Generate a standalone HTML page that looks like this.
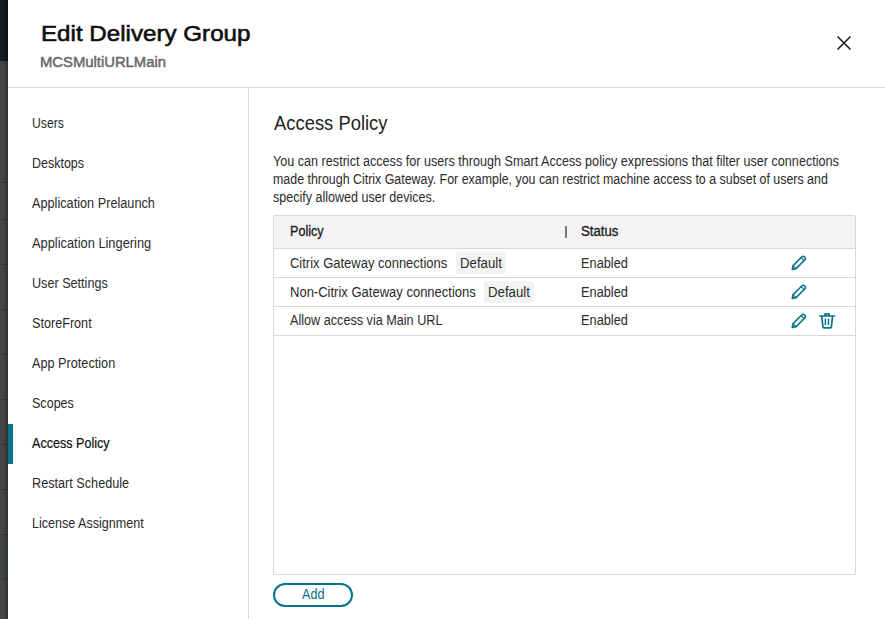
<!DOCTYPE html>
<html>
<head>
<meta charset="utf-8">
<title>Edit Delivery Group</title>
<style>
html,body{margin:0;padding:0;}
body{width:885px;height:619px;overflow:hidden;background:#fff;position:relative;font-family:"Liberation Sans",sans-serif;color:#1b1b1b;font-size:14px;}
.abs{position:absolute;}
.t{position:absolute;white-space:nowrap;line-height:20px;transform-origin:0 50%;}
#strip{left:0;top:0;width:8px;height:619px;background:linear-gradient(to right,#464646 0,#444 3px,#3f3f3f 5px,#393939 6.5px,#2d2d2d 8px);}
#striptop{left:0;top:0;width:8px;height:61px;background:linear-gradient(to right,#141f21 0,#121c1e 5px,#0a1618 6.5px,#020f10 8px);}
.sl{left:0;width:8px;height:1px;background:rgba(0,0,0,0.18);}
#hline{left:8px;top:87px;width:877px;height:1px;background:#d8d8d8;}
#vline{left:248px;top:88px;width:1px;height:531px;background:#d8d8d8;}
#bar{left:8px;top:424px;width:5px;height:40px;background:#07758a;}
#table{left:273px;top:215px;width:581px;height:358px;border:1px solid #d8d8d8;border-radius:2px;background:#fff;}
#thead{left:274px;top:216px;width:581px;height:32px;background:#f3f3f3;}
.rl{left:274px;width:581px;height:1px;background:#d8d8d8;}
.tag{height:22px;background:#f3f3f3;border-radius:3px;}
#sep{left:565px;top:226px;width:2px;height:12px;background:#777;}
#add{left:273px;top:583px;width:76px;height:20px;border:2px solid #08728a;border-radius:12px;}
svg{position:absolute;overflow:visible;}
</style>
</head>
<body>
<div class="abs" id="strip"></div>
<div class="abs" id="striptop"></div>
<div class="abs sl" style="top:182px"></div>
<div class="abs sl" style="top:219px"></div>
<div class="abs sl" style="top:264px"></div>
<div class="abs sl" style="top:309px"></div>
<div class="abs sl" style="top:354px"></div>
<div class="abs sl" style="top:399px"></div>
<div class="abs sl" style="top:444px"></div>
<div class="abs sl" style="top:489px"></div>
<div class="abs sl" style="top:534px"></div>
<div class="abs sl" style="top:579px"></div>
<div class="abs" style="left:0;top:535px;width:8px;height:44px;background:rgba(20,55,60,0.13)"></div>
<div class="abs" id="hline"></div>
<div class="abs" id="vline"></div>
<svg id="close" style="left:837px;top:36px" width="14" height="14" viewBox="0 0 14 14"><path d="M0.5 0.5 L13.5 13.5 M13.5 0.5 L0.5 13.5" stroke="#1b1b1b" stroke-width="1.45" fill="none"/></svg>
<div class="abs" id="bar"></div>
<div class="abs" id="table"></div>
<div class="abs" id="thead"></div>
<div class="abs rl" style="top:248px"></div>
<div class="abs rl" style="top:277px"></div>
<div class="abs rl" style="top:306px"></div>
<div class="abs rl" style="top:335px"></div>
<div class="abs" id="sep"></div>
<div class="abs tag" id="tag1" style="left:456px;top:252px;width:50px"></div>
<div class="abs tag" id="tag2" style="left:484px;top:281px;width:50px"></div>
<div class="abs" id="add"></div>
<svg class="pen" style="left:786px;top:250px" width="26" height="26" viewBox="0 0 26 26"><g fill="none" stroke="#08728a" stroke-width="1.55" stroke-linejoin="round" stroke-linecap="round"><path d="M6.25 19.45 L7.06 15.60 L15.69 6.97 A2.15 2.15 0 0 1 18.73 10.01 L10.10 18.64 Z"/><path d="M7.06 15.60 L10.10 18.64" stroke-width="1.2"/><path d="M15.05 7.61 L18.09 10.65" stroke-width="1.2"/><path d="M6.25 19.45 L6.92 17.43 L8.27 18.78 Z" fill="#08728a" stroke-width="0.5"/></g></svg>
<svg class="pen" style="left:786px;top:279px" width="26" height="26" viewBox="0 0 26 26"><g fill="none" stroke="#08728a" stroke-width="1.55" stroke-linejoin="round" stroke-linecap="round"><path d="M6.25 19.45 L7.06 15.60 L15.69 6.97 A2.15 2.15 0 0 1 18.73 10.01 L10.10 18.64 Z"/><path d="M7.06 15.60 L10.10 18.64" stroke-width="1.2"/><path d="M15.05 7.61 L18.09 10.65" stroke-width="1.2"/><path d="M6.25 19.45 L6.92 17.43 L8.27 18.78 Z" fill="#08728a" stroke-width="0.5"/></g></svg>
<svg class="pen" style="left:786px;top:308px" width="26" height="26" viewBox="0 0 26 26"><g fill="none" stroke="#08728a" stroke-width="1.55" stroke-linejoin="round" stroke-linecap="round"><path d="M6.25 19.45 L7.06 15.60 L15.69 6.97 A2.15 2.15 0 0 1 18.73 10.01 L10.10 18.64 Z"/><path d="M7.06 15.60 L10.10 18.64" stroke-width="1.2"/><path d="M15.05 7.61 L18.09 10.65" stroke-width="1.2"/><path d="M6.25 19.45 L6.92 17.43 L8.27 18.78 Z" fill="#08728a" stroke-width="0.5"/></g></svg>
<svg id="trash" style="left:814px;top:308px" width="26" height="26" viewBox="0 0 26 26" fill="none" stroke="#08728a" stroke-linecap="round" stroke-linejoin="round">
<path d="M5.6 8 H20.4" stroke-width="1.65"/>
<path d="M10.9 7.6 V6.6 a0.8 0.8 0 0 1 .8 -.8 h2.7 a.8 .8 0 0 1 .8 .8 V7.6" stroke-width="1.7"/>
<path d="M7.8 8.6 L8.9 18.9 a1 1 0 0 0 1 .9 H16.4 a1 1 0 0 0 1 -.9 L18.5 8.6" stroke-width="1.7"/>
<path d="M11.4 11.2 V16.6 M14.5 11.2 V16.6" stroke-width="1.5"/>
</svg>

<div class="t" id="title" style="left:40.53px;top:24px;font-size:22.5px;font-weight:normal;color:#0f0f0f;transform:translateY(0.00px) scaleX(1.0736);-webkit-text-stroke:0.6px #0f0f0f;">Edit Delivery Group</div>
<div class="t" id="sub" style="left:40.23px;top:52px;font-size:15.5px;font-weight:normal;color:#6b6b6b;transform:translateY(0.00px) scaleX(0.9556);-webkit-text-stroke:0.55px #6b6b6b;">MCSMultiURLMain</div>
<div class="t" id="n1" style="left:32.38px;top:113px;font-size:14px;font-weight:normal;color:#2b2b2b;transform:translateY(0.00px) scaleX(0.8742);">Users</div>
<div class="t" id="n2" style="left:31.81px;top:153px;font-size:14px;font-weight:normal;color:#2b2b2b;transform:translateY(0.00px) scaleX(0.8918);">Desktops</div>
<div class="t" id="n3" style="left:32.20px;top:193px;font-size:14px;font-weight:normal;color:#2b2b2b;transform:translateY(0.00px) scaleX(0.9078);">Application Prelaunch</div>
<div class="t" id="n4" style="left:32.20px;top:233px;font-size:14px;font-weight:normal;color:#2b2b2b;transform:translateY(0.00px) scaleX(0.9171);">Application Lingering</div>
<div class="t" id="n5" style="left:32.22px;top:273px;font-size:14px;font-weight:normal;color:#2b2b2b;transform:translateY(0.00px) scaleX(0.9012);">User Settings</div>
<div class="t" id="n6" style="left:31.80px;top:313px;font-size:14px;font-weight:normal;color:#2b2b2b;transform:translateY(0.00px) scaleX(0.9017);">StoreFront</div>
<div class="t" id="n7" style="left:32.20px;top:353px;font-size:14px;font-weight:normal;color:#2b2b2b;transform:translateY(0.00px) scaleX(0.9059);">App Protection</div>
<div class="t" id="n8" style="left:31.80px;top:393px;font-size:14px;font-weight:normal;color:#2b2b2b;transform:translateY(0.00px) scaleX(0.8965);">Scopes</div>
<div class="t" id="n9" style="left:31.99px;top:433px;font-size:14px;font-weight:normal;color:#0f0f0f;transform:translateY(0.00px) scaleX(0.8981);-webkit-text-stroke:0.2px #0f0f0f;">Access Policy</div>
<div class="t" id="n10" style="left:31.77px;top:473px;font-size:14px;font-weight:normal;color:#2b2b2b;transform:translateY(0.00px) scaleX(0.9047);">Restart Schedule</div>
<div class="t" id="n11" style="left:31.78px;top:513px;font-size:14px;font-weight:normal;color:#2b2b2b;transform:translateY(0.00px) scaleX(0.8977);">License Assignment</div>
<div class="t" id="h2" style="left:273.60px;top:113px;font-size:20px;font-weight:normal;color:#1f1f1f;transform:translateY(0.00px) scaleX(0.9202);">Access Policy</div>
<div class="t" id="p1" style="left:273.20px;top:151px;font-size:14px;font-weight:normal;color:#2b2b2b;transform:translateY(0.00px) scaleX(0.9007);">You can restrict access for users through Smart Access policy expressions that filter user connections</div>
<div class="t" id="p2" style="left:272.92px;top:169px;font-size:14px;font-weight:normal;color:#2b2b2b;transform:translateY(0.00px) scaleX(0.8861);">made through Citrix Gateway. For example, you can restrict machine access to a subset of users and</div>
<div class="t" id="p3" style="left:273.20px;top:187px;font-size:14px;font-weight:normal;color:#2b2b2b;transform:translateY(0.00px) scaleX(0.8951);">specify allowed user devices.</div>
<div class="t" id="th1" style="left:289.64px;top:221px;font-size:14px;font-weight:normal;color:#1f1f1f;transform:translateY(0.00px) scaleX(0.8991);-webkit-text-stroke:0.35px #1f1f1f;">Policy</div>
<div class="t" id="th2" style="left:581.33px;top:221px;font-size:14px;font-weight:normal;color:#1f1f1f;transform:translateY(0.00px) scaleX(0.9399);-webkit-text-stroke:0.35px #1f1f1f;">Status</div>
<div class="t" id="r1a" style="left:290.00px;top:253px;font-size:14px;font-weight:normal;color:#2b2b2b;transform:translateY(0.00px) scaleX(0.9269);">Citrix Gateway connections</div>
<div class="t" id="r1b" style="left:459.69px;top:253px;font-size:14px;font-weight:normal;color:#2b2b2b;transform:translateY(0.00px) scaleX(0.9430);">Default</div>
<div class="t" id="r1c" style="left:580.66px;top:253px;font-size:14px;font-weight:normal;color:#2b2b2b;transform:translateY(0.00px) scaleX(0.9130);">Enabled</div>
<div class="t" id="r2a" style="left:289.72px;top:282px;font-size:14px;font-weight:normal;color:#2b2b2b;transform:translateY(0.00px) scaleX(0.9292);">Non-Citrix Gateway connections</div>
<div class="t" id="r2b" style="left:487.68px;top:282px;font-size:14px;font-weight:normal;color:#2b2b2b;transform:translateY(0.00px) scaleX(0.9434);">Default</div>
<div class="t" id="r2c" style="left:580.66px;top:282px;font-size:14px;font-weight:normal;color:#2b2b2b;transform:translateY(0.00px) scaleX(0.9130);">Enabled</div>
<div class="t" id="r3a" style="left:289.60px;top:310px;font-size:14px;font-weight:normal;color:#2b2b2b;transform:translateY(0.00px) scaleX(0.9030);">Allow access via Main URL</div>
<div class="t" id="r3c" style="left:580.66px;top:310px;font-size:14px;font-weight:normal;color:#2b2b2b;transform:translateY(0.00px) scaleX(0.9130);">Enabled</div>
<div class="t" id="addt" style="left:302.20px;top:584px;font-size:14px;font-weight:normal;color:#08728a;transform:translateY(0.00px) scaleX(0.8995);">Add</div>
</body>
</html>
